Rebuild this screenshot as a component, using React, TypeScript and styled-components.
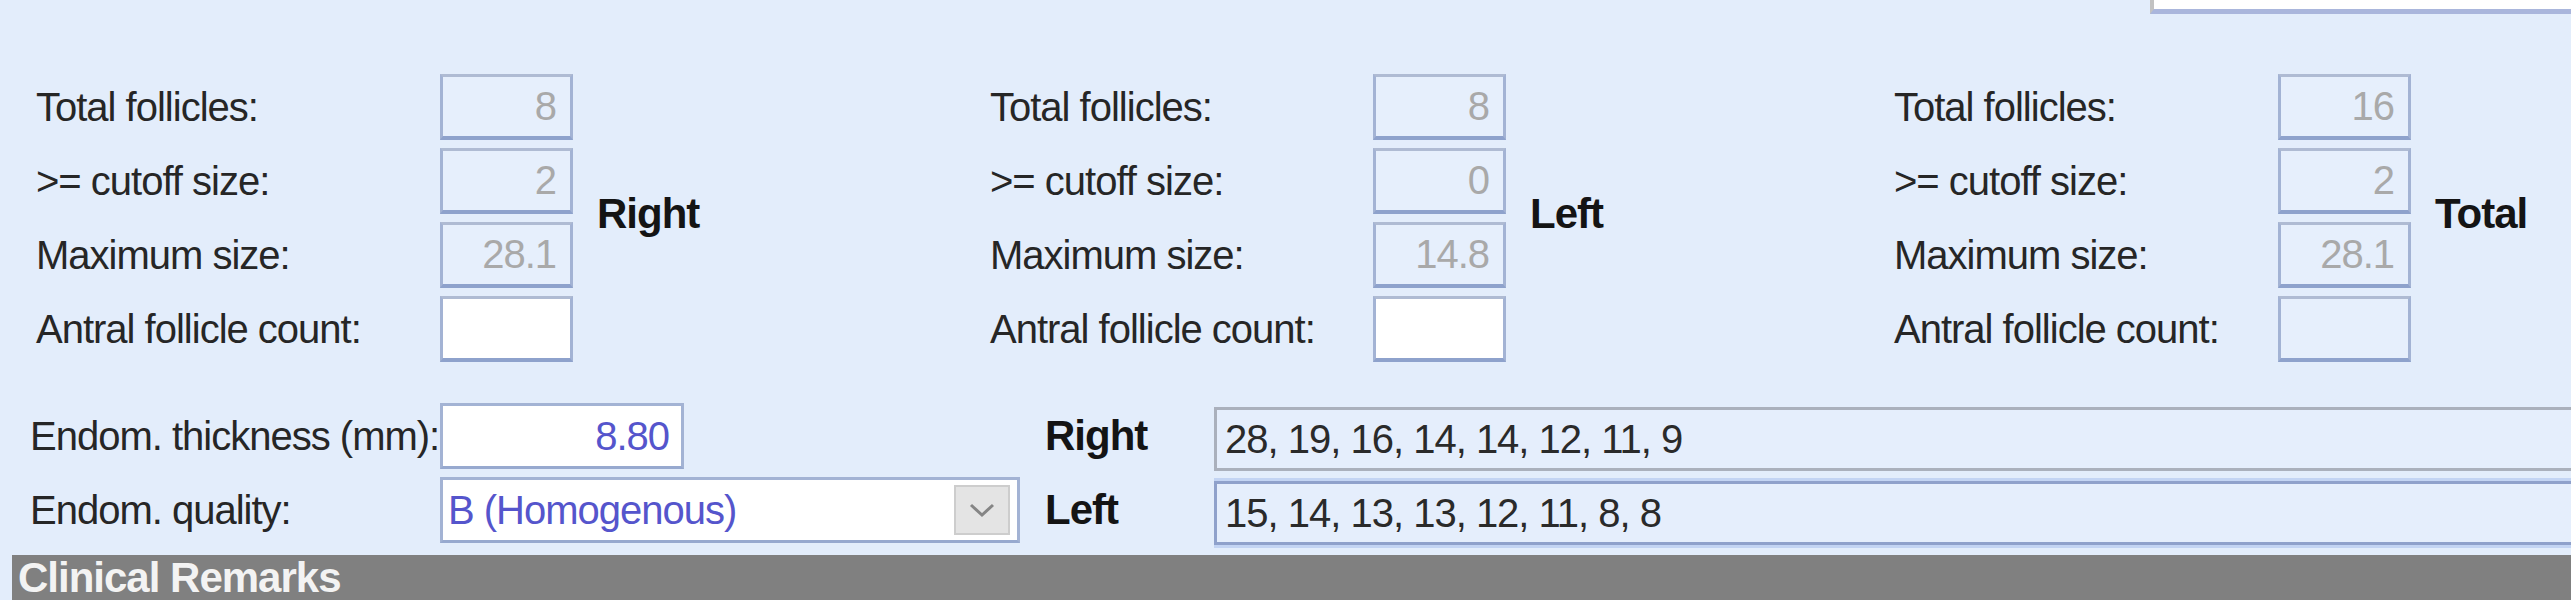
import { Fragment } from "react";
import styled, { createGlobalStyle } from "styled-components";

const GlobalStyle = createGlobalStyle`
  body {
    margin: 0;
    background: #e3edfb;
  }
`;

const Page = styled.div`
  width: 2571px;
  height: 600px;
  overflow: hidden;
  display: flex;
  flex-direction: column;
  background: #e3edfb;
  font-family: "Liberation Sans", Arial, sans-serif;
  font-size: 40px;
  letter-spacing: -1px;
  color: #262626;
`;

const TopStrip = styled.div`
  display: flex;
  justify-content: flex-end;
  height: 14px;
  flex: none;
`;

const TopField = styled.div`
  width: 421px;
  box-sizing: border-box;
  background: #ffffff;
  border-left: 4px solid #c2c2c2;
  border-bottom: 5px solid #aab6dc;
`;

const Summary = styled.div`
  display: flex;
  margin-top: 60px;
  padding-left: 36px;
  flex: none;
`;

const Group = styled.div<{ $width?: number; $labelWidth: number }>`
  display: grid;
  grid-template-columns: ${(p) => p.$labelWidth}px 133px auto;
  grid-template-rows: repeat(4, 66px);
  row-gap: 8px;
  width: ${(p) => (p.$width ? `${p.$width}px` : "auto")};
  flex: none;
`;

const Label = styled.span`
  grid-column: 1;
  align-self: center;
  white-space: nowrap;
`;

const NumBox = styled.div<{ $white?: boolean }>`
  grid-column: 2;
  display: flex;
  align-items: center;
  justify-content: flex-end;
  box-sizing: border-box;
  padding-right: 14px;
  color: #a9a9a9;
  background: ${(p) => (p.$white ? "#ffffff" : "#e6effc")};
  border: 3px solid #a3b3d4;
  border-top-color: #afbbd3;
  border-bottom: 4px solid #8ea2cc;
`;

const Side = styled.div`
  grid-column: 3;
  grid-row: 1 / span 4;
  align-self: center;
  margin-left: 24px;
  margin-bottom: 8px;
  font-weight: bold;
  font-size: 42px;
  color: #141414;
  white-space: nowrap;
`;

const Lower = styled.div`
  display: grid;
  grid-template-columns: 410px 580px 194px 1400px;
  grid-template-rows: 66px 66px;
  row-gap: 8px;
  align-items: center;
  margin-top: 41px;
  padding-left: 30px;
  flex: none;
`;

const Field = styled.div<{ $width?: number }>`
  width: ${(p) => (p.$width ? `${p.$width}px` : "auto")};
  height: 66px;
  box-sizing: border-box;
  display: flex;
  align-items: center;
  background: #ffffff;
  border: 3px solid #a3b3d4;
  border-bottom-color: #97a9cf;
  color: #5555cc;
`;

const ThicknessField = styled(Field)`
  justify-content: flex-end;
  padding-right: 12px;
`;

const SelectField = styled(Field)`
  padding: 5px 7px 5px 5px;
`;

const SelectText = styled.span`
  flex: 1;
  white-space: nowrap;
`;

const SelectButton = styled.div`
  width: 56px;
  height: 50px;
  box-sizing: border-box;
  display: flex;
  align-items: center;
  justify-content: center;
  background: #e4e4e4;
  border: 2px solid #cdcdcd;
`;

const SideLabel = styled.span`
  padding-left: 25px;
  font-weight: bold;
  font-size: 42px;
  color: #141414;
`;

const ListBox = styled.div<{ $tone: "gray" | "blue" }>`
  height: 64px;
  box-sizing: border-box;
  display: flex;
  align-items: center;
  padding-left: 8px;
  margin-top: 6px;
  white-space: nowrap;
  color: #2a2a2a;
  background: #e5eefc;
  border: 3px solid ${(p) => (p.$tone === "gray" ? "#aab0bc" : "#8fa1cb")};
  box-shadow: ${(p) =>
    p.$tone === "blue" ? "0 3px 0 #c3d4f3, 0 -3px 0 #c3d4f3" : "none"};
`;

const Bar = styled.div`
  flex: 1;
  margin-top: 12px;
  margin-left: 12px;
  padding: 4px 0 0 6px;
  background: #808080;
  color: #f3f3f3;
  font-weight: bold;
  font-size: 42px;
  line-height: 38px;
`;

type Stat = { label: string; value: string; white?: boolean };

const groups: { side: string; width?: number; labelWidth: number; stats: Stat[] }[] = [
  {
    side: "Right",
    width: 954,
    labelWidth: 404,
    stats: [
      { label: "Total follicles:", value: "8" },
      { label: ">= cutoff size:", value: "2" },
      { label: "Maximum size:", value: "28.1" },
      { label: "Antral follicle count:", value: "", white: true },
    ],
  },
  {
    side: "Left",
    width: 904,
    labelWidth: 383,
    stats: [
      { label: "Total follicles:", value: "8" },
      { label: ">= cutoff size:", value: "0" },
      { label: "Maximum size:", value: "14.8" },
      { label: "Antral follicle count:", value: "", white: true },
    ],
  },
  {
    side: "Total",
    labelWidth: 384,
    stats: [
      { label: "Total follicles:", value: "16" },
      { label: ">= cutoff size:", value: "2" },
      { label: "Maximum size:", value: "28.1" },
      { label: "Antral follicle count:", value: "" },
    ],
  },
];

const Chevron = () => (
  <svg width="26" height="16" viewBox="0 0 26 16">
    <polyline points="2,3 13,13 24,3" fill="none" stroke="#858585" strokeWidth="3" />
  </svg>
);

export default function App() {
  return (
    <Page>
      <GlobalStyle />
      <TopStrip>
        <TopField />
      </TopStrip>

      <Summary>
        {groups.map((g) => (
          <Group key={g.side} $width={g.width} $labelWidth={g.labelWidth}>
            <Side>{g.side}</Side>
            {g.stats.map((s) => (
              <Fragment key={s.label}>
                <Label>{s.label}</Label>
                <NumBox $white={s.white}>{s.value}</NumBox>
              </Fragment>
            ))}
          </Group>
        ))}
      </Summary>

      <Lower>
        <Label>Endom. thickness (mm):</Label>
        <ThicknessField $width={244}>8.80</ThicknessField>
        <SideLabel>Right</SideLabel>
        <ListBox $tone="gray">28, 19, 16, 14, 14, 12, 11, 9</ListBox>

        <Label>Endom. quality:</Label>
        <SelectField>
          <SelectText>B (Homogenous)</SelectText>
          <SelectButton>
            <Chevron />
          </SelectButton>
        </SelectField>
        <SideLabel>Left</SideLabel>
        <ListBox $tone="blue">15, 14, 13, 13, 12, 11, 8, 8</ListBox>
      </Lower>

      <Bar>Clinical Remarks</Bar>
    </Page>
  );
}
